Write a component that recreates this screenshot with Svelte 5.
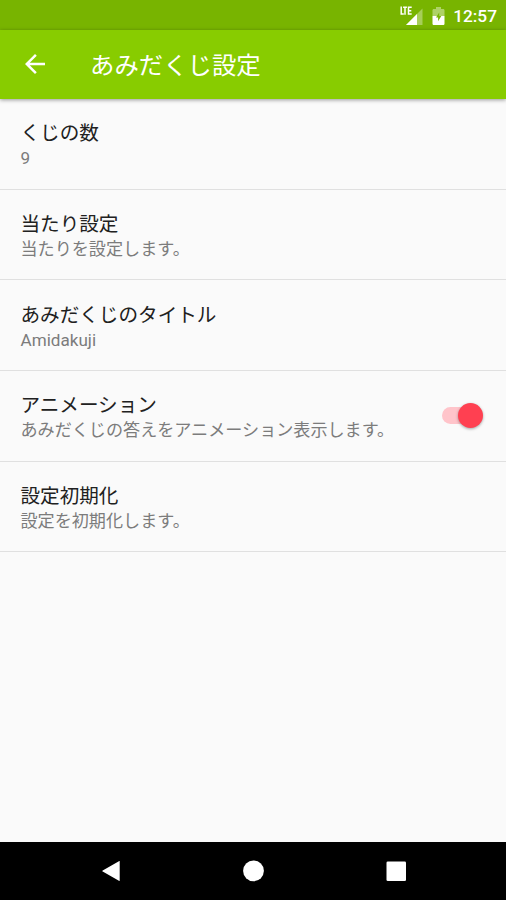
<script lang="ts">
    type Setting = {
        title: string;
        summary: string;
        toggle?: boolean;
    };

    const settings: Setting[] = [
        { title: "くじの数", summary: "9" },
        { title: "当たり設定", summary: "当たりを設定します。" },
        { title: "あみだくじのタイトル", summary: "Amidakuji" },
        { title: "アニメーション", summary: "あみだくじの答えをアニメーション表示します。", toggle: true },
        { title: "設定初期化", summary: "設定を初期化します。" }
    ];

    let animation = $state(true);
</script>

<div class="screen" lang="ja">
    <div class="status-bar">
        <svg class="signal" width="23" height="20" viewBox="0 0 23 20">
            <path d="M22.5 2.5V19H6z" fill="#fff" opacity="0.35" />
            <path d="M17 8V19H6z" fill="#fff" />
            <path d="M1.200 .5V8.100H3.800M3.100 1.200H6.900M5 1.200V8.800M11.700 1.200H8.500V8.100H11.700M8.500 4.700H11.300" fill="none" stroke="#fff" stroke-width="1.5" />
        </svg>
        <svg class="battery" width="13" height="18" viewBox="0 0 13 18">
            <path d="M4 0h5v2h2.2c.7 0 1.3.6 1.3 1.3V9H.5V3.300C.5 2.600 1.100 2 1.800 2H4z" fill="#fff" opacity="0.4" />
            <path d="M.5 9h12v7.700c0 .7-.6 1.300-1.300 1.300H1.800c-.7 0-1.300-.6-1.300-1.300z" fill="#fff" />
            <path d="M7.200 5.500L4 10.500h2.100v3.700L9.300 9H7.200z" fill="#78b400" />
        </svg>
        <span class="clock">12:57</span>
    </div>

    <header class="app-bar">
        <button class="back" aria-label="戻る">
            <svg width="30" height="30" viewBox="0 0 24 24">
                <path d="M20 11H7.830l5.590-5.590L12 4l-8 8 8 8 1.410-1.410L7.830 13H20z" fill="#fff" />
            </svg>
        </button>
        <h1>あみだくじ設定</h1>
    </header>

    <main>
        {#each settings as item (item.title)}
            <div class="row">
                <div class="label">
                    <h2>{item.title}</h2>
                    <p>{item.summary}</p>
                </div>
                {#if item.toggle}
                    <button
                        class="switch"
                        class:on={animation}
                        role="switch"
                        aria-checked={animation}
                        aria-label={item.title}
                        onclick={() => (animation = !animation)}
                    >
                        <span class="thumb"></span>
                    </button>
                {/if}
            </div>
        {/each}
    </main>

    <nav class="nav-bar">
        <svg width="24" height="24" viewBox="0 0 24 24">
            <path d="M20.700 2.600V21.400c0 .5-.4.600-.8.400L3.700 12.600c-.5-.3-.5-.9 0-1.200L19.900 2.200c.4-.2.800-.1.800.4z" fill="#fff" />
        </svg>
        <svg width="24" height="24" viewBox="0 0 24 24">
            <circle cx="11.500" cy="11.800" r="10.400" fill="#fff" />
        </svg>
        <svg width="24" height="24" viewBox="0 0 24 24">
            <rect x="2.500" y="2.500" width="19.500" height="19.500" rx="1.300" fill="#fff" />
        </svg>
    </nav>
</div>

<style>
    :global(body) {
        margin: 0;
    }

    .screen {
        display: flex;
        flex-direction: column;
        width: 506px;
        height: 900px;
        overflow: hidden;
        background: #fafafa;
        font-family: Roboto, "Noto Sans CJK JP", sans-serif;
    }

    .status-bar {
        display: flex;
        align-items: center;
        justify-content: flex-end;
        box-sizing: border-box;
        height: 29.5px;
        padding: 2px 9px 0 0;
        background: #78b400;
    }

    .signal {
        margin-right: 9.5px;
    }

    .battery {
        margin-right: 8px;
    }

    .clock {
        color: #fff;
        font-size: 17.3px;
        font-weight: 500;
        line-height: 20px;
    }

    .app-bar {
        display: flex;
        align-items: center;
        flex-shrink: 0;
        height: 69px;
        padding-left: 20px;
        background: #8c0;
        box-shadow: 0 1px 4px rgba(0, 0, 0, 0.4);
        z-index: 1;
    }

    button {
        padding: 0;
        border: none;
        background: none;
        cursor: pointer;
    }

    .back {
        display: flex;
    }

    h1 {
        margin: 3px 0 0 40px;
        color: #fff;
        font-size: 24.4px;
        font-weight: 400;
        line-height: 36px;
    }

    main {
        flex: 1;
        padding-top: 0.7px;
    }

    .row {
        display: flex;
        align-items: center;
        justify-content: space-between;
        box-sizing: border-box;
        height: 90.65px;
        padding: 0 23px 0 20.5px;
        border-bottom: 1.5px solid #e0e0e0;
    }

    .label {
        padding-top: 3.5px;
    }

    h2 {
        margin: 0;
        color: #212121;
        font-size: 19.6px;
        font-weight: 400;
        line-height: 26px;
    }

    p {
        margin: 0;
        color: #7c7c7c;
        font-size: 17.1px;
        line-height: 23px;
    }

    .switch {
        display: flex;
        align-items: center;
        width: 41px;
        height: 17px;
        border-radius: 9px;
        background: linear-gradient(#d0d0d0, #d0d0d0) no-repeat left / 36px 17px;
    }

    .thumb {
        width: 25px;
        height: 25px;
        flex-shrink: 0;
        border-radius: 50%;
        background: #f1f1f1;
        box-shadow: 0 1px 3px rgba(0, 0, 0, 0.35);
    }

    .switch.on {
        justify-content: flex-end;
        background-image: linear-gradient(#ffc4ca, #ffc4ca);
    }

    .on .thumb {
        background: #ff4051;
    }

    .nav-bar {
        display: flex;
        align-items: center;
        justify-content: space-between;
        box-sizing: border-box;
        height: 58px;
        padding: 0 98px 0 99px;
        background: #000;
    }
</style>
